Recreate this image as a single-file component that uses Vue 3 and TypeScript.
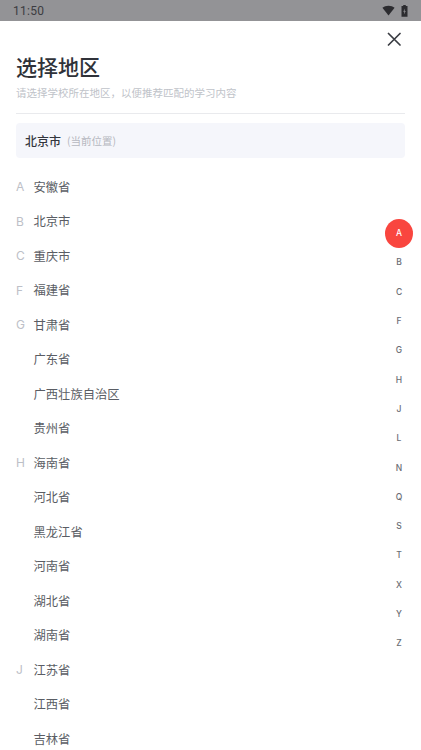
<script setup lang="ts">
interface Row { letter: string; name: string }
const rows: Row[] = [
  { letter: 'A', name: '安徽省' },
  { letter: 'B', name: '北京市' },
  { letter: 'C', name: '重庆市' },
  { letter: 'F', name: '福建省' },
  { letter: 'G', name: '甘肃省' },
  { letter: '', name: '广东省' },
  { letter: '', name: '广西壮族自治区' },
  { letter: '', name: '贵州省' },
  { letter: 'H', name: '海南省' },
  { letter: '', name: '河北省' },
  { letter: '', name: '黑龙江省' },
  { letter: '', name: '河南省' },
  { letter: '', name: '湖北省' },
  { letter: '', name: '湖南省' },
  { letter: 'J', name: '江苏省' },
  { letter: '', name: '江西省' },
  { letter: '', name: '吉林省' },
]
const index = ['A', 'B', 'C', 'F', 'G', 'H', 'J', 'L', 'N', 'Q', 'S', 'T', 'X', 'Y', 'Z']
</script>

<template>
  <div class="screen">
    <div class="status">
      <span class="time">11:50</span>
      <div class="status-icons">
        <svg width="13" height="11" viewBox="0 0 16 13"><path d="M0.5 3.2C2.5 1.4 5 .5 8 .5s5.500.9 7.500 2.700L8 12.500z" fill="#2c2c30" /></svg>
        <svg width="7" height="12" viewBox="0 0 8 14"><path d="M2.500 0h3v1.300H7.500v12.500H.5V1.300h2z" fill="#2c2c30" /><path d="M4.500 4 2.500 8h1.300L3.300 11l2.200-4H4.200z" fill="#8e8e92" /></svg>
      </div>
    </div>
    <div class="close-row">
      <svg class="close" width="14" height="14" viewBox="0 0 14 14"><path d="M1.500 1.500l11.500 11.500M13 1.500 1.500 13" stroke="#3a3d43" stroke-width="1.700" fill="none" stroke-linecap="round" /></svg>
    </div>
    <header class="head">
      <h1>选择地区</h1>
      <p>请选择学校所在地区，以便推荐匹配的学习内容</p>
    </header>
    <div class="current">
      <strong>北京市</strong>
      <span>(当前位置)</span>
    </div>
    <ul class="list">
      <li v-for="row in rows" :key="row.name" class="row">
        <span class="letter">{{ row.letter }}</span>
        <span class="name">{{ row.name }}</span>
      </li>
    </ul>
    <nav class="index">
      <span v-for="(l, i) in index" :key="l" class="idx" :class="{ on: i === 0 }">{{ l }}</span>
    </nav>
  </div>
</template>

<style>
html, body { margin: 0; background: #fff; overflow: hidden; }
</style>

<style scoped>
.screen {
  position: relative;
  width: 421px;
  height: 750px;
  overflow: hidden;
  background: #fff;
  font-family: Inter, "Noto Sans CJK SC", sans-serif;
}
.status {
  height: 21px;
  background: #939396;
  display: flex;
  align-items: center;
  justify-content: space-between;
  padding: 0 13px 0 13px;
  box-sizing: border-box;
}
.time { font: 12px Roboto, sans-serif; color: #3c3c41; letter-spacing: .3px; }
.status-icons { display: flex; align-items: center; gap: 6px; }
.close-row { display: flex; justify-content: flex-end; padding: 11px 20px 0 0; height: 14px; }
.close { display: block; }
.head { padding: 0 16px; }
h1 {
  margin: 6px 0 0;
  font-size: 21px;
  line-height: 28px;
  font-weight: 500;
  color: #2f3239;
  font-family: "Noto Sans CJK SC", sans-serif;
}
.head p {
  margin: 5px 0 0;
  padding-bottom: 12px;
  font-size: 10.500px;
  line-height: 16px;
  color: #c0c3c9;
  border-bottom: 1px solid #e9eaed;
  font-family: "Noto Sans CJK SC", sans-serif;
}
.current {
  margin: 9px 16px 0;
  height: 35px;
  background: #f5f6fb;
  border-radius: 4px;
  display: flex;
  align-items: center;
  padding-left: 9px;
  gap: 6px;
  font-family: "Noto Sans CJK SC", sans-serif;
}
.current strong { font-size: 12px; font-weight: 500; color: #33363d; }
.current span { font-size: 10.500px; color: #b5b8c0; }
.list { list-style: none; margin: 11.500px 0 0; padding: 0 0 0 16px; }
.row { height: 34.500px; display: flex; align-items: center; }
.letter { width: 17.500px; font-size: 12px; color: #bdc0c7; }
.name { font-size: 12.300px; color: #5a5d64; font-family: "Noto Sans CJK SC", sans-serif; }
.index {
  position: absolute;
  right: 8px;
  top: 218.500px;
  width: 28px;
  display: flex;
  flex-direction: column;
  align-items: center;
}
.idx {
  height: 29.300px;
  width: 28px;
  display: flex;
  align-items: center;
  justify-content: center;
  font-size: 8.500px;
  font-weight: 500;
  color: #6a6d74;
}
.idx.on { height: 29px; margin-bottom: .300px; background: #f9463f; color: #fff; border-radius: 50%; }
</style>
